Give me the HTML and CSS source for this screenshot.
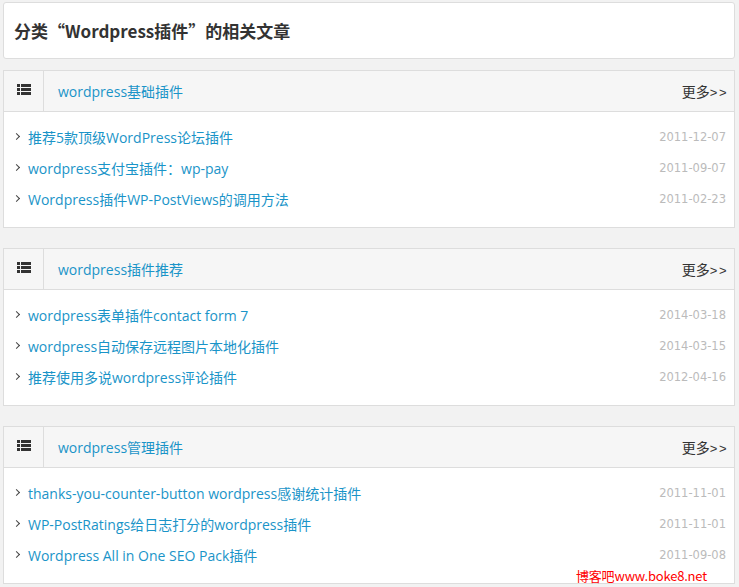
FILE: index.html
```html
<!DOCTYPE html>
<html lang="zh-CN">
<head>
<meta charset="utf-8">
<link rel="stylesheet" href="styles.css">
</head>
<body>
<div class="page">
  <div class="title-box"><h1>分类“Wordpress插件”的相关文章</h1></div>

  <div class="cat">
    <div class="cat-head">
      <div class="icon-cell"><svg width="14" height="11" viewBox="0 0 14 11"><g fill="#333"><rect x="0" y="0" width="3" height="3"/><rect x="4" y="0" width="10" height="3"/><rect x="0" y="4" width="3" height="3"/><rect x="4" y="4" width="10" height="3"/><rect x="0" y="8" width="3" height="3"/><rect x="4" y="8" width="10" height="3"/></g></svg></div>
      <a class="cat-name">wordpress基础插件</a>
      <a class="more">更多<span class="gt">&gt;&gt;</span></a>
    </div>
    <ul class="posts">
      <li><span class="arr"></span><a>推荐5款顶级WordPress论坛插件</a><span class="date">2011-12-07</span></li>
      <li><span class="arr"></span><a>wordpress支付宝插件：wp-pay</a><span class="date">2011-09-07</span></li>
      <li><span class="arr"></span><a>Wordpress插件WP-PostViews的调用方法</a><span class="date">2011-02-23</span></li>
    </ul>
  </div>

  <div class="cat">
    <div class="cat-head">
      <div class="icon-cell"><svg width="14" height="11" viewBox="0 0 14 11"><g fill="#333"><rect x="0" y="0" width="3" height="3"/><rect x="4" y="0" width="10" height="3"/><rect x="0" y="4" width="3" height="3"/><rect x="4" y="4" width="10" height="3"/><rect x="0" y="8" width="3" height="3"/><rect x="4" y="8" width="10" height="3"/></g></svg></div>
      <a class="cat-name">wordpress插件推荐</a>
      <a class="more">更多<span class="gt">&gt;&gt;</span></a>
    </div>
    <ul class="posts">
      <li><span class="arr"></span><a>wordpress表单插件contact form 7</a><span class="date">2014-03-18</span></li>
      <li><span class="arr"></span><a>wordpress自动保存远程图片本地化插件</a><span class="date">2014-03-15</span></li>
      <li><span class="arr"></span><a>推荐使用多说wordpress评论插件</a><span class="date">2012-04-16</span></li>
    </ul>
  </div>

  <div class="cat">
    <div class="cat-head">
      <div class="icon-cell"><svg width="14" height="11" viewBox="0 0 14 11"><g fill="#333"><rect x="0" y="0" width="3" height="3"/><rect x="4" y="0" width="10" height="3"/><rect x="0" y="4" width="3" height="3"/><rect x="4" y="4" width="10" height="3"/><rect x="0" y="8" width="3" height="3"/><rect x="4" y="8" width="10" height="3"/></g></svg></div>
      <a class="cat-name">wordpress管理插件</a>
      <a class="more">更多<span class="gt">&gt;&gt;</span></a>
    </div>
    <ul class="posts">
      <li><span class="arr"></span><a>thanks-you-counter-button wordpress感谢统计插件</a><span class="date">2011-11-01</span></li>
      <li><span class="arr"></span><a>WP-PostRatings给日志打分的wordpress插件</a><span class="date">2011-11-01</span></li>
      <li><span class="arr"></span><a>Wordpress All in One SEO Pack插件</a><span class="date">2011-09-08</span></li>
    </ul>
  </div>
</div>
<div class="watermark">博客吧www.boke8.net</div>
</body>
</html>
```
FILE: styles.css
```css
html, body {
  margin: 0;
  padding: 0;
  background: #f2f2f2;
}
body {
  font-family: "Open Sans", "Noto Sans CJK SC", sans-serif;
  font-size: 14px;
  color: #333;
  position: relative;
  min-height: 587px;
  overflow: hidden;
}
.page {
  padding: 2px 4px 0 3px;
  display: flex;
  flex-direction: column;
}
.title-box {
  background: #fff;
  border: 1px solid #ddd;
  border-radius: 3px;
  height: 55px;
  display: flex;
  align-items: center;
  padding-left: 10px;
  margin-bottom: 11px;
}
.title-box h1 {
  margin: 0;
  font-size: 17px;
  font-weight: bold;
  color: #333;
  font-family: "Noto Sans CJK SC", "Open Sans", sans-serif;
}
.cat {
  background: #fff;
  border: 1px solid #ddd;
  margin-bottom: 20px;
}
.cat-head {
  display: flex;
  align-items: center;
  height: 40px;
  background: #f6f6f6;
  border-bottom: 1px solid #ddd;
}
.icon-cell {
  width: 40px;
  height: 40px;
  border-right: 1px solid #ddd;
  display: flex;
  align-items: center;
  justify-content: center;
  padding-bottom: 3px;
  box-sizing: border-box;
}
.cat-name {
  color: #1a94c8;
  margin-left: 14px;
  flex: 1;
}
.more {
  color: #333;
  margin-right: 6px;
  font-family: "Noto Sans CJK SC", "Liberation Sans", sans-serif;
  font-size: 14px;
}
.more .gt {
  letter-spacing: 1.5px;
  font-family: "Liberation Sans", sans-serif;
  font-size: 13px;
}
.posts {
  list-style: none;
  margin: 0;
  padding: 9px 8px 13px 10px;
}
.posts li {
  display: flex;
  align-items: center;
  height: 31px;
}
.arr {
  width: 4px;
  height: 4px;
  border-top: 1.5px solid #444;
  border-right: 1.5px solid #444;
  transform: rotate(45deg);
  margin: 0 9px 0 0;
}
.posts a {
  color: #1a94c8;
  flex: 1;
}
.date {
  color: #bbb;
  font-family: "DejaVu Sans", sans-serif;
  font-size: 11.5px;
}
.watermark {
  position: absolute;
  left: 576px;
  top: 566px;
  color: #f00;
  font-family: "Noto Sans CJK SC", "Liberation Sans", sans-serif;
  font-size: 13px;
  letter-spacing: -0.2px;
}
```
